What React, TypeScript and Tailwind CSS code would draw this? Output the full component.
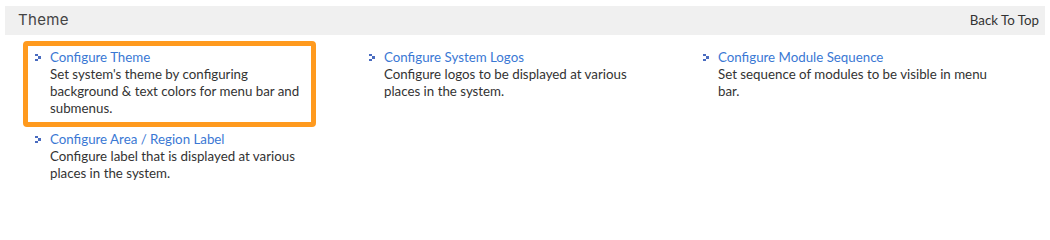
import React from "react";

type Item = { title: string; desc: string; highlight?: boolean; extra?: string };

const items: Item[] = [
  { title: "Configure Theme", desc: "Set system's theme by configuring background & text colors for menu bar and submenus.", highlight: true },
  { title: "Configure System Logos", desc: "Configure logos to be displayed at various places in the system." },
  { title: "Configure Module Sequence", desc: "Set sequence of modules to be visible in menu bar." },
  { title: "Configure Area / Region Label", desc: "Configure label that is displayed at various places in the system.", extra: "-mt-[4px]" },
];

function Bullet() {
  return (
    <svg width="7" height="7" viewBox="0 0 7 7" className="shrink-0 mt-[5px]">
      <rect x="0" y="0" width="3" height="2" fill="#4a6cc0" />
      <rect x="3" y="2" width="3" height="3" fill="#4a6cc0" />
      <rect x="0" y="5" width="3" height="2" fill="#4a6cc0" />
    </svg>
  );
}

export default function App() {
  return (
    <div className="w-[1050px] h-[218px] bg-white pt-[6px] px-[5px]" style={{ fontFamily: '"Lato", "Liberation Sans", sans-serif' }}>
      <div className="h-[29px] bg-[#f0f0f0] flex items-center justify-between pl-[13px] pr-[6px]">
        <span className="text-[15px] text-[#444] tracking-[0.3px]" style={{ fontFamily: '"Inter", "Lato", sans-serif' }}>Theme</span>
        <span className="text-[13.3px] text-[#333]">Back To Top</span>
      </div>
      <div className="grid grid-cols-[334px_334px_334px] pl-[18px] pt-[6px]">
        {items.map((it, i) => (
          <div
            key={i}
            className={`border-[5px] rounded-[4px] pl-[7px] pr-[4px] pt-[3px] pb-[5px] flex gap-[8px] ${it.highlight ? "w-[293px] border-[#ff9a1e]" : "w-[320px] border-transparent"} ${it.extra ?? ""}`}
          >
            <Bullet />
            <div className={`text-[13.3px] leading-[17px] ${it.highlight ? "w-[262px]" : "w-[276px]"}`}>
              <div className="text-[#3a78d4]">{it.title}</div>
              <div className="text-[#333]">{it.desc}</div>
            </div>
          </div>
        ))}
      </div>
    </div>
  );
}
